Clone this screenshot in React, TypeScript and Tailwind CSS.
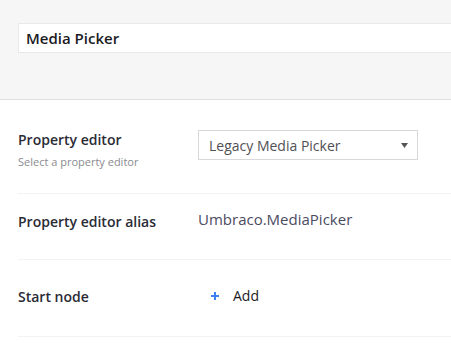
export default function App() {
  const font = { fontFamily: '"Open Sans", "Noto Sans", sans-serif' };
  return (
    <div className="w-[451px] h-[343px] overflow-hidden bg-white" style={font}>
      <div className="h-[100px] bg-[#f6f6f6] border-b border-[#e0e0e0] pt-[23px] pl-[18px]">
        <div className="h-[30px] w-[460px] bg-white border border-[#e9e9eb] flex items-center pl-[7px]">
          <span className="text-[15px] font-semibold text-[#1b1b1f]">Media Picker</span>
        </div>
      </div>
      <div className="pl-[18px]">
        <div className="h-[94px] flex pt-[30px] border-b border-[#f3f3f5]">
          <div className="w-[180px] flex flex-col">
            <span className="text-[14px] leading-[20px] font-semibold text-[#2a2b35]">Property editor</span>
            <span className="text-[11px] leading-[18px] text-[#8b8b90] mt-[3px]">Select a property editor</span>
          </div>
          <div className="w-[220px] h-[30px] border border-[#d8d7d9] flex items-center pl-[10px] pr-[9px] justify-between">
            <span className="text-[14px] text-[#515054]">Legacy Media Picker</span>
            <svg width="7" height="5" viewBox="0 0 7 5"><path d="M0 0H7L3.5 5Z" fill="#555" /></svg>
          </div>
        </div>
        <div className="h-[66px] flex pt-[15px] border-b border-[#f3f3f5]">
          <div className="w-[180px]">
            <span className="text-[14px] leading-[20px] font-semibold text-[#2a2b35]">Property editor alias</span>
          </div>
          <span className="text-[15px] leading-[20px] text-[#4b4b5f]">Umbraco.MediaPicker</span>
        </div>
        <div className="h-[77px] flex items-start pt-[24px] border-b border-[#f3f3f5]">
          <div className="w-[180px]">
            <span className="text-[14px] leading-[20px] font-semibold text-[#2a2b35]">Start node</span>
          </div>
          <div className="flex items-center pl-[13px] gap-[14px] mt-[2px]">
            <svg width="8" height="8" viewBox="0 0 8 8"><path d="M4 0V8M0 4H8" stroke="#3b82f6" strokeWidth="2" /></svg>
            <span className="text-[14px] leading-[20px] text-[#1b1b1f]">Add</span>
          </div>
        </div>
      </div>
    </div>
  );
}
